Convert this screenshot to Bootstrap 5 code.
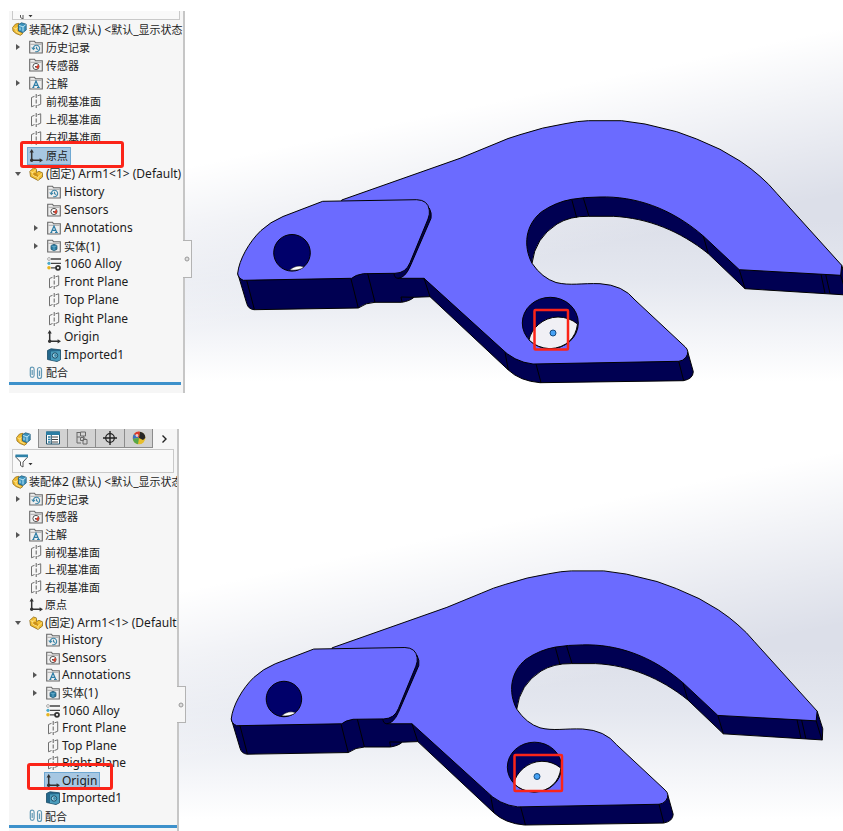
<!DOCTYPE html>
<html lang="zh-CN">
<head>
<meta charset="utf-8">
<meta name="viewport" content="width=device-width, initial-scale=1">
<title>装配体2</title>
<link href="https://cdn.jsdelivr.net/npm/bootstrap@5.3.0/dist/css/bootstrap.min.css" rel="stylesheet">
<style>
body{background:#fff;color:#1c1c1c;font:12px/16px "Noto Sans","Noto Sans CJK SC",sans-serif;overflow-x:hidden}
.page{padding:11px 0 0 9px;gap:36px}
.tree-pane{width:176px;background:#f6f6f6;border-right:2px solid #c6c6c6}
.tree-pane.compact{width:170px}
.tree-clip{overflow:hidden;padding-right:2px}
.filter{margin:0 1px 0 3px;border:1px solid #c9c9c9;height:24px;background:#f9f9f9}
.filter.cut{height:9px;border-top:0;overflow:hidden}
.filter button,.toggle,.tabs button{border:0;background:none;padding:0;line-height:0}
.filter button{padding-left:2px}
.filter input{border:0;background:none;min-width:0;outline:0;padding:0}
.tree{min-height:362px}
.compact .tree{min-height:352px}
.tree li{flex:1 1 0;white-space:nowrap}
.l1{padding-left:18px}
.l2{padding-left:36px}
.compact .l2{padding-left:35px}
.l0{padding-left:2px}
.toggle{width:10px;margin-left:-14px;margin-right:4px}
.entry{border:1px solid transparent;padding-right:2px;gap:3px;height:18px}
.compact .entry{gap:2px;height:17px}
.l0 .entry{gap:2px}
.entry svg{width:14px;height:14px;flex:none;margin-left:1px}
.l0 .entry svg{width:15px;margin-left:0}
.picked{background:#a7c7e2;border-color:#6fa8d2}
.zh{font:11px/16px "Noto Sans CJK SC",sans-serif}
.rollback{height:3px;background:#3d91cb}
.compact .rollback{margin-right:-2px}
.tabs{height:20px;background:#f6f6f6}
.tabs button{width:29px;height:19px;background:#d2d2d2;border-right:1px solid #8c8c8c;border-bottom:1px solid #8c8c8c}
.tabs button.on{width:31px;background:#f8f8f8;border-bottom:0}
.tabs button.more{width:22px;background:none;border:0}
.scene{min-width:0;background:linear-gradient(168deg,#fff 30%,rgba(255,255,255,0) 62%),linear-gradient(180deg,#dcdfe9 55%,#e4e7ef 70%,#fff 97%)}
.scene>svg{width:100%;height:auto;display:block}
.handle{left:-2px;top:229px;width:9px;height:38px;background:#f6f6f6;border:1px solid #b3b3b3;border-left:0;padding:0;line-height:0}
.compact+.scene .handle{top:257px;height:37px}
.callout-box{border:3px solid #fb2418;border-radius:3px;pointer-events:none}
.c1{left:11px;top:130px;width:104px;height:27px}
.c2{left:18px;top:334px;width:86px;height:27px}
</style>
<script src="https://cdn.jsdelivr.net/npm/bootstrap@5.3.0/dist/js/bootstrap.bundle.min.js"></script>
</head>
<body>
<svg width="0" height="0" class="position-absolute" aria-hidden="true">
<defs>
<symbol id="asm" viewBox="0 0 15 14"><path d="M.6 5.500 3.500 2 7 1.300v4l.5 3.700 3.500 2.300-2.500 2L4 11.500 1 9z" fill="#f0b92c" stroke="#94701a" stroke-width=".8"/><path d="M1.500 5.800 4 7v2.500l4.500 2.300M4 7l1.500-2" fill="none" stroke="#ffe58b" stroke-width="1"/><path d="M6.300 2.800 9.500.8l4.700 1.400V8L11 10.500 6.500 9z" fill="#3c93bd" stroke="#1f5c7b" stroke-width=".8"/><path d="m7 3.500 4 1.300 2.700-2M11 5v4.500M8 5.500v2.700" fill="none" stroke="#c9edf9" stroke-width=".9"/></symbol>
<symbol id="part" viewBox="0 0 14 14"><path d="M.8 4.300 4.500 1l3 1v3.500L10 4.300l3.500 1.500V10L9 13.400 1.500 9.500z" fill="#f2bd30" stroke="#8d6a17" stroke-width=".8"/><path d="M1.300 4.600 4 5.500 7 2.500M4 5.500v2.800l5 2 4.300-4M9 10.500V13" fill="none" stroke="#ffe995" stroke-width=".9"/><path d="M4.300 6v2L9 10V8.300L7.300 6z" fill="#c98f19"/></symbol>
<symbol id="fold" viewBox="0 0 14 14"><path d="M.7 13V1.200h4.800l1 1.600h6.800V13z" fill="#eeeeee" stroke="#686868" stroke-width="1.100"/><path d="M1.500 4.300h11" stroke="#999" stroke-width=".8"/></symbol>
<symbol id="hist" viewBox="0 0 14 14"><use href="#fold"/><path d="M4.300 9a3.200 3.200 0 1 1 2 2.500M2.700 7.500 4.400 9.400 6 7.800M7.500 6.700v2l1.700.8" fill="none" stroke="#3d86a8" stroke-width="1.100"/></symbol>
<symbol id="sens" viewBox="0 0 14 14"><use href="#fold"/><circle cx="7" cy="8.500" r="3.100" fill="#fff" stroke="#555" stroke-width="1"/><path d="m6.500 9 3-2.500a3.500 3.500 0 0 1-1 4.500z" fill="#d9402d"/><circle cx="6.700" cy="8.800" r=".8" fill="#333"/></symbol>
<symbol id="anno" viewBox="0 0 14 14"><use href="#fold"/><path d="M3.300 11.500h2M8 11.500h2.800M4.300 11.300 7 5l2.700 6.300M5.200 9.300h3.500" fill="none" stroke="#2d7da6" stroke-width="1.200"/></symbol>
<symbol id="solid" viewBox="0 0 14 14"><use href="#fold"/><path d="m4 6.500 3-1.200 3 1.200v3.800L7 11.800l-3-1.500z" fill="#2c7da3" stroke="#174e69" stroke-width=".7"/><path d="m4.300 6.800 2.700 1 2.700-1M7 8v3.500" fill="none" stroke="#8ccbe2" stroke-width=".6"/></symbol>
<symbol id="plane" viewBox="0 0 14 14"><path d="M5.500 2.300 2.500 3.500v9.300L5.500 11.500M8.500 1.800 11.700.8v9.400L8.500 11.500" fill="none" stroke="#707070"/><path d="M7.200 0v14" stroke="#606060" stroke-dasharray="4 1.500"/></symbol>
<symbol id="orig" viewBox="0 0 14 14"><path d="M2.700 2v9.300H12" fill="none" stroke="#333" stroke-width="1.500"/><path d="M2.700 0 .6 3.400h4.200zM14 11.300l-3.400-2.100v4.200z" fill="#333"/><circle cx="2.700" cy="11.300" r="1.700" fill="#333"/></symbol>
<symbol id="mat" viewBox="0 0 14 14"><path d="M4 2h10M4 6.300h10M4 10.800h6" stroke="#444" stroke-width="1.300"/><circle cx="2" cy="2" r="1.400" fill="#fff" stroke="#888" stroke-width=".7"/><circle cx="2" cy="6.300" r="1.600" fill="#4ca9c9"/><circle cx="2" cy="10.800" r="1.800" fill="#e6b420"/><circle cx="11" cy="10.800" r="2" fill="none" stroke="#333" stroke-width="1.700"/></symbol>
<symbol id="imp" viewBox="0 0 14 14"><path d="M.5 2.500 4 .8l9.500 1v10L10 13.500l-9.500-2z" fill="#24688c" stroke="#174a66" stroke-width=".8"/><path d="M4 3.500 13 3v8.800l-3 1.200-6-1z" fill="#4a9cbc"/><circle cx="8" cy="7.500" r="2.700" fill="#a5d6e6" stroke="#174a66"/><circle cx="8.500" cy="7.500" r="1.400" fill="#3b8cad"/></symbol>
<symbol id="mate" viewBox="0 0 14 14"><path d="M1.300 4v5.500a1.900 1.900 0 0 0 3.800 0V3a1.900 1.900 0 0 0-3.800 0v1M3.200 4v5M8.500 5v5.500a2 2 0 0 0 4 0V3.500a2 2 0 0 0-4 0V5M10.500 4.500V10" fill="none" stroke="#6399b5" stroke-width="1.200"/></symbol>
<symbol id="funnel" viewBox="0 0 18 14"><path d="M1 1.500h11.500v1.700L8 8v5l-2.500-1.500V8L1 3.200z" fill="#fff" stroke="#555"/><path d="M.5.500h12.500v2.700H.5z" fill="#2f82a8"/><path d="M13.500 9h4l-2 2.200z" fill="#333"/></symbol>
<g id="arm" stroke="#000" stroke-width="1" stroke-linejoin="round">
<path fill="#000052" d="M237.700 273.300 246.700 303.300Q248 309 254 309.700L358.300 308Q366 302.500 375 302.300H401.700Q410 301 414 297.300L430 296.700 508.300 370Q520 381 540 382.700L683.300 380.700Q693 379 693.300 371.700L687.700 351.700 424 270 300 250z"/>
<path fill="#000052" d="M526.300 256 532 263.300Q535 238 557 224 570 216 588.300 216.300H613.300C648 218 680 231 708.300 253.700L745 288.700 847 295 847.500 283.500 841.700 265.300 739 250 640 180 550 190 515 220z"/>
<path fill="#6b6bff" d="M341.700 200 460 158.300 496 143.500Q508 138 520 134.700 543 127 565 123.700 578 121 588.300 120.700H621.700L645 124 676.700 131.700 696.700 139 720 149.300 740 161Q752 169 760 176.300 769 184 776.700 193.300L841.700 265.300 840.700 275.300 739.300 269.700 703.300 236C671 208 635 196 600 197Q585 197 571.700 199.300 556 202 541.700 211.700C525 225 523 246 532 263.300Q542 278 556 282.500C570 286 582 283 600 283.700Q623 285 635 300L685 346.700Q690 351 686 357.300 683 361 678.700 361.300L533 364Q514 362 500 347.300L424 278.300H398L395 273 341 240z"/>
<path fill="#000052" d="M429.300 208Q432 213 431 218.300L410 266.700Q405 278 398 278.300 394 278 394 273L400 268z"/>
<path fill="#6b6bff" d="M237.700 273.300C239 260 249 242 261 230.500Q270 222 283 216.500L322.700 201.300 416.700 199.700Q428 200 429.300 210 430 214 428 219L410 262.700Q406 273 395 273.300L363.300 273.700Q355 275 351.700 278.300L243.300 280.300Q238 278 237.700 273.300z"/>
<circle cx="292" cy="252.800" r="18.300" fill="#00006a"/><path d="M289.500 270Q297 264 304 267 299 271 289.500 270z" fill="#fff" stroke-width=".5"/>
<ellipse cx="550.300" cy="323" rx="28" ry="25.700" fill="#00005e"/>
<path fill="#f0f0f5" d="M529 340C531 329 543 317 558 317Q569 317 577.500 324C576 338 566 348 550 348.700Q537 348 529 340z"/>
<path fill="none" d="m246.700 280.300 7.600 29M351 279l7.300 29M367.700 273.700l7.300 28.600M424 278.300l6 18.400M414 297.300l-13-.3 1 5M505 352.300l3.300 17.700M536 364l5 18.700M678.700 361.300l5 19.400M571.700 199.300l5 18.400M583.300 198l5.700 18.300M703.300 236l5 17.700M739.300 269.700l5.700 19M821 274.300l4 19M825.700 274.500l4.300 19M840.700 275.300l6 20"/>
</g>
</defs>
</svg>

<main class="page d-flex flex-column">
<section class="d-flex position-relative">
 <aside class="tree-pane flex-shrink-0" aria-label="设计树"><div class="tree-clip">
  <div class="filter cut d-flex align-items-end"><button type="button" aria-label="筛选"><svg width="18" height="4" viewBox="0 9 18 4"><path d="M5.500 8v3.500L8 13V8" fill="#fff" stroke="#555"/><path d="M13.500 9h4l-2 2.200z" fill="#333"/></svg></button></div>
  <ul class="tree list-unstyled d-flex flex-column mb-0" data-tree="1"></ul>
  <div class="rollback"></div></div>
 </aside>
 <div class="scene flex-grow-1 position-relative">
  <svg viewBox="185 11 658 382" role="img" aria-label="Arm1"><use href="#arm"/><circle cx="553" cy="333" r="3" fill="#46a2f5" stroke="#174c80"/><rect x="534.500" y="310" width="33.500" height="39.500" rx="1" fill="none" stroke="#fb2418" stroke-width="2.500"/></svg>
  <button type="button" class="handle position-absolute" aria-label="折叠"><svg width="6" height="6"><circle cx="3" cy="3" r="2" fill="#ddd" stroke="#999"/></svg></button>
 </div>
 <div class="callout-box c1 position-absolute"></div>
</section>

<section class="d-flex position-relative">
 <aside class="tree-pane compact flex-shrink-0" aria-label="设计树"><div class="tree-clip">
  <div class="tabs d-flex">
   <button type="button" class="on" aria-label="设计树"><svg width="15" height="14"><use href="#asm"/></svg></button>
   <button type="button" aria-label="属性"><svg width="14" height="14"><path d="M.5 1h13v12H.5z" fill="#fff" stroke="#24536b"/><path d="M0 .5h14V4H0z" fill="#2b7da3"/><path d="M2 6h2.500M2 8.500h2.500M2 11h2.500" stroke="#287ba0" stroke-width="1.500"/><path d="M6 6h6M6 8.500h6M6 11h6" stroke="#444"/><path d="M5.300 4v9" stroke="#24536b"/></svg></button>
   <button type="button" aria-label="配置"><svg width="14" height="14" fill="none" stroke="#686868"><path d="M2 1v11h4M2 6h3M2 1.500h4"/><path d="M5.500 1h5v4h-5zM5.500 6.500h3v3h-3zM8 8.500h4V13H8z"/><path d="m8 5 3 4"/></svg></button>
   <button type="button" aria-label="尺寸"><svg width="14" height="14" fill="none" stroke="#222"><circle cx="7" cy="7" r="4.300" stroke-width="1.200"/><path d="M7 0v14M0 7h14" stroke-width="1.400"/></svg></button>
   <button type="button" aria-label="外观"><svg width="14" height="14"><circle cx="7" cy="7" r="6.300" fill="#e7be2e"/><path d="M7 7 2 3a6.300 6.300 0 0 1 6-2.300z" fill="#dc392d"/><path d="m7 7 1-6.300A6.300 6.300 0 0 1 13.300 7L11 9z" fill="#252525"/><path d="M7 7 .8 8A6.300 6.300 0 0 1 2 3z" fill="#3b6fc1"/><path d="m7 7-6.200 1A6.300 6.300 0 0 0 6 13.200z" fill="#55a74b"/><circle cx="5" cy="4.500" r="1.400" fill="#fff" opacity=".7"/></svg></button>
   <button type="button" class="more" aria-label="更多"><svg width="7" height="10"><path d="m1.500 1.500 3.500 3.500-3.500 3.500" fill="none" stroke="#222" stroke-width="1.400"/></svg></button>
  </div>
  <div class="filter d-flex align-items-center"><button type="button" aria-label="筛选"><svg width="18" height="14"><use href="#funnel"/></svg></button><input type="text" class="flex-grow-1" aria-label="筛选文字"></div>
  <ul class="tree list-unstyled d-flex flex-column mb-0" data-tree="2"></ul>
  <div class="rollback"></div></div>
 </aside>
 <div class="scene flex-grow-1 position-relative">
  <svg viewBox="179 429 664 402" role="img" aria-label="Arm1"><use href="#arm" transform="matrix(.97 0 0 .97 .7 453.800)"/><circle cx="537" cy="776.500" r="3" fill="#46a2f5" stroke="#174c80"/><rect x="514.500" y="755" width="47.500" height="36" rx="1" fill="none" stroke="#fb2418" stroke-width="2.500"/></svg>
  <button type="button" class="handle position-absolute" aria-label="折叠"><svg width="6" height="6"><circle cx="3" cy="3" r="2" fill="#ddd" stroke="#999"/></svg></button>
 </div>
 <div class="callout-box c2 position-absolute"></div>
</section>
</main>
<script>
// level, icon, label, toggle state (r = collapsed, d = expanded)
const items = [
 [0,'asm','装配体2 (默认) <默认_显示状态'],[1,'hist','历史记录','r'],[1,'sens','传感器'],[1,'anno','注解','r'],
 [1,'plane','前视基准面'],[1,'plane','上视基准面'],[1,'plane','右视基准面'],[1,'orig','原点'],
 [1,'part','(固定) Arm1<1> (Default)','d'],[2,'hist','History'],[2,'sens','Sensors'],[2,'anno','Annotations','r'],
 [2,'solid','实体(1)','r'],[2,'mat','1060 Alloy'],[2,'plane','Front Plane'],[2,'plane','Top Plane'],
 [2,'plane','Right Plane'],[2,'orig','Origin'],[2,'imp','Imported1'],[1,'mate','配合']
];
const esc = s => s.replace(/</g,'&lt;').replace(/>/g,'&gt;').replace(/[\u4e00-\u9fff]+/g, m => `<span class="zh">${m}</span>`);
const shape = {r:'M3 2v6l4-3z', d:'M2 3h6L5 7z'};
document.querySelectorAll('[data-tree]').forEach(ul => {
 const picked = ul.dataset.tree === '1' ? '原点' : 'Origin';
 ul.innerHTML = items.map(([l,i,t,s]) => `<li class="d-flex align-items-center l${l}">` +
  (s ? `<button type="button" class="toggle" aria-label="展开"><svg width="10" height="10"><path d="${shape[s]}" fill="#555"/></svg></button>` : '') +
  `<span class="entry d-flex align-items-center${t===picked?' picked':''}"><svg aria-hidden="true"><use href="#${i}"/></svg><span>${esc(t)}</span></span></li>`).join('');
});
</script>
</body>
</html>
